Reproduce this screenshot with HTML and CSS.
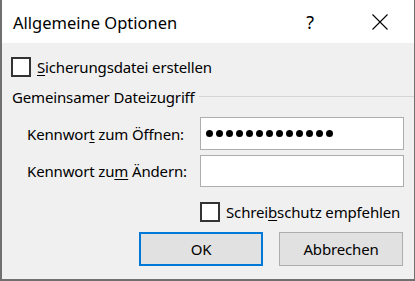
FILE: index.html
```html
<!DOCTYPE html>
<html lang="de">
<head>
<meta charset="utf-8">
<title>Allgemeine Optionen</title>
<link rel="stylesheet" href="styles.css">
</head>
<body>
<div class="dialog">
  <div class="titlebar">
    <span class="title">Allgemeine Optionen</span>
    <span class="help">?</span>
    <span class="close"><svg width="16" height="16" viewBox="0 0 16 16"><path d="M0.5 0.5L15.5 15.5M15.5 0.5L0.5 15.5" stroke="#000" stroke-width="1.1" fill="none"/></svg></span>
  </div>
  <div class="content">
    <label class="check first"><span class="box"></span><span><u>S</u>icherungsdatei erstellen</span></label>
    <div class="group"><span>Gemeinsamer Dateizugriff</span><span class="rule"></span></div>
    <div class="form">
      <span class="lbl">Kennwor<u>t</u> zum Öffnen:</span>
      <div class="field pw"><span class="dot"></span><span class="dot"></span><span class="dot"></span><span class="dot"></span><span class="dot"></span><span class="dot"></span><span class="dot"></span><span class="dot"></span><span class="dot"></span><span class="dot"></span><span class="dot"></span><span class="dot"></span><span class="dot"></span></div>
      <span class="lbl">Kennwort zu<u>m</u> Ändern:</span>
      <div class="field second"></div>
    </div>
    <label class="check ro"><span class="box"></span><span>Schrei<u>b</u>schutz empfehlen</span></label>
    <div class="buttons">
      <button class="btn ok">OK</button>
      <button class="btn">Abbrechen</button>
    </div>
  </div>
</div>
</body>
</html>
```
FILE: styles.css
```css
html, body {
  margin: 0;
  padding: 0;
  background: #f0f0f0;
}
body {
  font-family: "Segoe UI", "Noto Sans", sans-serif;
  font-size: 15px;
  letter-spacing: -0.15px;
  color: #000;
}
.dialog {
  width: 415px;
  height: 281px;
  box-sizing: border-box;
  border-left: 2px solid #707070;
  border-right: 1px solid #707070;
  border-bottom: 2px solid #707070;
  display: flex;
  flex-direction: column;
}
.titlebar {
  height: 43px;
  background: #fff;
  display: flex;
  align-items: center;
  flex-shrink: 0;
}
.title {
  margin-left: 11px;
  font-size: 16.5px;
  letter-spacing: 0;
  margin-top: 2px;
  flex: 1;
}
.help {
  font-size: 18px;
  margin-right: 58px;
  margin-top: 1px;
}
.close {
  display: flex;
  margin-right: 26px;
  margin-top: 0px;
}
.content {
  flex: 1;
  background: #f0f0f0;
  display: flex;
  flex-direction: column;
}
.check {
  display: flex;
  align-items: center;
  height: 20px;
}
.box {
  width: 20px;
  height: 20px;
  box-sizing: border-box;
  border: 2px solid #333;
  background: #fff;
  margin-right: 6px;
  flex-shrink: 0;
}
u {
  text-decoration-thickness: 1px;
  text-underline-offset: 2px;
}
.first {
  margin-top: 14px;
  margin-left: 9px;
}
.group {
  margin-top: 10px;
  height: 20px;
  display: flex;
  align-items: center;
  margin-left: 10px;
}
.rule {
  flex: 1;
  height: 1px;
  background: #d5d5d5;
  margin-left: 4px;
  margin-top: -1px;
}
.form {
  margin-top: 10px;
  display: grid;
  grid-template-columns: 173px 204px;
  grid-template-rows: 33px 32px;
  row-gap: 5px;
  padding-left: 25px;
  align-items: center;
}
.field {
  height: 100%;
  box-sizing: border-box;
  border: 1px solid #adadad;
  background: #fff;
}
.pw {
  display: flex;
  align-items: center;
  gap: 3px;
  padding-left: 5px;
}
.dot {
  width: 7px;
  height: 7px;
  border-radius: 50%;
  background: #000;
}
.ro {
  margin-top: 15px;
  margin-left: 198px;
}
.buttons {
  margin-top: 10px;
  display: flex;
  justify-content: flex-end;
  gap: 16px;
  padding-right: 11px;
}
.btn {
  width: 124px;
  height: 34px;
  box-sizing: border-box;
  border: 1px solid #adadad;
  background: #e1e1e1;
  font-family: inherit;
  font-size: 15px;
  letter-spacing: -0.15px;
  color: #000;
  padding: 0;
  margin: 0;
}
.ok {
  border: 2px solid #0078d7;
}
```
